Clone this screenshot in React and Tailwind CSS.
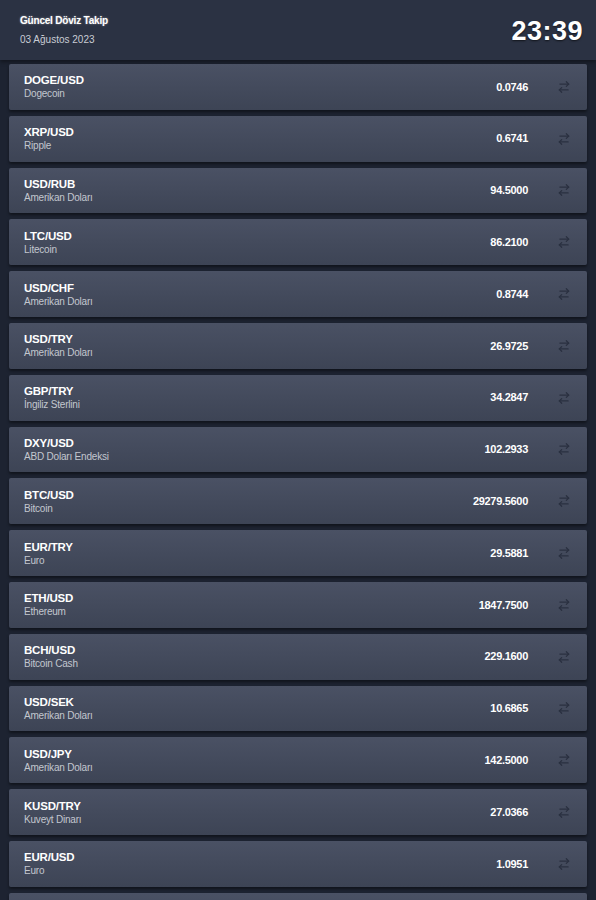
import React from "react";

const rows = [
  ["DOGE/USD", "Dogecoin", "0.0746"],
  ["XRP/USD", "Ripple", "0.6741"],
  ["USD/RUB", "Amerikan Doları", "94.5000"],
  ["LTC/USD", "Litecoin", "86.2100"],
  ["USD/CHF", "Amerikan Doları", "0.8744"],
  ["USD/TRY", "Amerikan Doları", "26.9725"],
  ["GBP/TRY", "İngiliz Sterlini", "34.2847"],
  ["DXY/USD", "ABD Doları Endeksi", "102.2933"],
  ["BTC/USD", "Bitcoin", "29279.5600"],
  ["EUR/TRY", "Euro", "29.5881"],
  ["ETH/USD", "Ethereum", "1847.7500"],
  ["BCH/USD", "Bitcoin Cash", "229.1600"],
  ["USD/SEK", "Amerikan Doları", "10.6865"],
  ["USD/JPY", "Amerikan Doları", "142.5000"],
  ["KUSD/TRY", "Kuveyt Dinarı", "27.0366"],
  ["EUR/USD", "Euro", "1.0951"],
];

function Swap() {
  return (
    <svg width="14" height="14" viewBox="0 0 24 24" fill="none" stroke="#2a3040" strokeWidth="2.2" strokeLinecap="round" strokeLinejoin="round">
      <path d="M16 3l4 4-4 4" />
      <path d="M20 7H5" />
      <path d="M8 21l-4-4 4-4" />
      <path d="M4 17h15" />
    </svg>
  );
}

const cardCls =
  "h-[45.8px] shrink-0 rounded-[2px] bg-gradient-to-b from-[#4a5164] to-[#3d4455] shadow-[0_2px_3px_rgba(0,0,0,0.45)] flex items-center pl-[15px] pr-[16px]";

export default function App() {
  return (
    <div className="w-[596px] h-[900px] overflow-hidden bg-[#1d2331]" style={{ fontFamily: '"Liberation Sans", Arial, sans-serif' }}>
      <div className="h-[60px] bg-[#2b3243] flex items-center justify-between pl-[20px] pr-[13px] shadow-[0_2px_4px_rgba(0,0,0,0.4)]">
        <div className="flex flex-col">
          <div className="text-[10px] font-bold text-white leading-[12px] tracking-[-0.2px] [text-shadow:0_0_2px_rgba(255,255,255,0.5)]">Güncel Döviz Takip</div>
          <div className="text-[10px] text-[#c9ccd4] leading-[12px] mt-[7px]">03 Ağustos 2023</div>
        </div>
        <div className="text-[27px] font-bold text-white tracking-[0.5px] leading-none mt-[3px] [text-shadow:0_1px_2px_rgba(0,0,0,0.6)]">23:39</div>
      </div>
      <div className="flex flex-col gap-[6px] pt-[4px] pl-[9px] pr-[9px]">
        {rows.map(([pair, name, val]) => (
          <div key={pair} className={cardCls}>
            <div className="flex flex-col flex-1">
              <div className="text-[11.5px] font-bold text-white leading-[14px] tracking-[-0.2px]">{pair}</div>
              <div className="text-[10px] text-[#c3c7cf] leading-[12px] mt-[1px] tracking-[-0.2px]">{name}</div>
            </div>
            <div className="text-[11px] font-bold text-white tracking-[-0.3px] mr-[29px]">{val}</div>
            <Swap />
          </div>
        ))}
        <div className={cardCls} />
      </div>
    </div>
  );
}
